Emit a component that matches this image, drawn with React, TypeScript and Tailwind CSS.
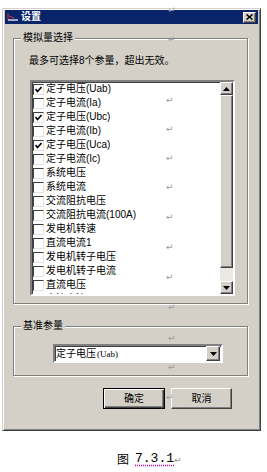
import React from 'react';

type Item = { label: string; checked: boolean };

const ITEMS: Item[] = [
  { label: '定子电压(Uab)', checked: true },
  { label: '定子电流(Ia)', checked: false },
  { label: '定子电压(Ubc)', checked: true },
  { label: '定子电流(Ib)', checked: false },
  { label: '定子电压(Uca)', checked: true },
  { label: '定子电流(Ic)', checked: false },
  { label: '系统电压', checked: false },
  { label: '系统电流', checked: false },
  { label: '交流阻抗电压', checked: false },
  { label: '交流阻抗电流(100A)', checked: false },
  { label: '发电机转速', checked: false },
  { label: '直流电流1', checked: false },
  { label: '发电机转子电压', checked: false },
  { label: '发电机转子电流', checked: false },
  { label: '直流电压', checked: false },
  { label: '直流电流2', checked: false },
];

// Word paragraph marks that sit over the screenshot
const MARKS: [number, number][] = [
  [168, 5], [168, 34], [166, 95], [166, 124], [166, 153], [166, 182],
  [166, 212], [166, 242], [166, 272], [168, 302], [168, 333], [168, 362], [166, 392],
];

const raised =
  'bg-[#d4d0c8] border border-t-white border-l-white border-r-[#404040] border-b-[#404040] shadow-[inset_-1px_-1px_0_#808080]';
const sunken =
  'border-2 border-t-[#808080] border-l-[#808080] border-r-white border-b-white';

function Arrow({ up }: { up?: boolean }) {
  return (
    <svg width="7" height="4" viewBox="0 0 7 4">
      <polygon points={up ? '3.5,0 7,4 0,4' : '0,0 7,0 3.5,4'} fill="#000" />
    </svg>
  );
}

function CheckBox({ checked }: { checked: boolean }) {
  return (
    <div className="w-[11px] h-[11px] shrink-0 bg-white border border-t-[#404040] border-l-[#404040] border-r-[#e4e4e4] border-b-[#e4e4e4] flex items-center justify-center">
      {checked && (
        <svg width="7" height="7" viewBox="0 0 7 7">
          <polyline points="0.5,3 2.5,5.5 6.5,1" fill="none" stroke="#000" strokeWidth="1.6" />
        </svg>
      )}
    </div>
  );
}

function GroupBox({ title, className, children }: { title: string; className?: string; children: React.ReactNode }) {
  return (
    <fieldset
      className={`ml-[8px] w-[235px] border border-[#808080] shadow-[1px_1px_0_#fff,inset_1px_1px_0_#fff] ${className ?? ''}`}
    >
      <legend className="ml-[7px] px-[2px] leading-[14px] bg-[#d4d0c8] text-black">{title}</legend>
      {children}
    </fieldset>
  );
}

export default function App() {
  return (
    <div className="relative w-[267px] h-[472px] bg-white overflow-hidden font-['Liberation_Sans','Noto_Sans_CJK_SC',sans-serif] text-[10px]">
      <div className="pt-[8px] pl-[2px]">
        <div className="w-[259px] h-[423px] bg-[#d4d0c8] border border-t-[#d4d0c8] border-l-[#d4d0c8] border-r-[#404040] border-b-[#404040] shadow-[inset_1px_1px_0_#fff,inset_-1px_-1px_0_#808080] px-[2px] pt-[1px]">
          {/* title bar */}
          <div className="h-[14px] bg-[#0a246a] flex items-center pl-[2px] pr-[2px]">
            <svg width="12" height="10" viewBox="0 0 12 10" className="shrink-0">
              <line x1="1" y1="1" x2="1" y2="8" stroke="#c03030" strokeWidth="1.2" />
              <line x1="1" y1="8" x2="11" y2="8" stroke="#e8e8f0" strokeWidth="1.4" />
              <line x1="2" y1="4" x2="7" y2="6" stroke="#d04040" strokeWidth="1" />
            </svg>
            <span className="ml-[2px] text-white font-bold leading-[14px]">设置</span>
            <div className={`ml-auto w-[13px] h-[11px] ${raised} flex items-center justify-center`}>
              <svg width="7" height="6" viewBox="0 0 7 6">
                <path d="M0.5 0.5 L6.5 5.5 M6.5 0.5 L0.5 5.5" stroke="#000" strokeWidth="1.5" />
              </svg>
            </div>
          </div>

          <GroupBox title="模拟量选择" className="mt-[7px] pb-[7px]">
            <div className="ml-[15px] mt-[9px] leading-[14px] text-black">最多可选择8个参量，超出无效。</div>
            <div className={`ml-[16px] mt-[12px] w-[205px] h-[216px] bg-white ${sunken} shadow-[inset_1px_1px_0_#404040] flex`}>
              <div className="flex-1 overflow-hidden pl-[1px]">
                {ITEMS.map((it) => (
                  <div key={it.label} className="h-[14px] flex items-center gap-[2px] text-black">
                    <CheckBox checked={it.checked} />
                    <span className="leading-[14px] whitespace-nowrap">{it.label}</span>
                  </div>
                ))}
              </div>
              <div className="w-[13px] flex flex-col">
                <div className={`h-[13px] ${raised} flex items-center justify-center`}>
                  <Arrow up />
                </div>
                <div className={`flex-1 ${raised}`} />
                <div className="h-[13px] bg-[#ebe9e4]" />
                <div className={`h-[13px] ${raised} flex items-center justify-center`}>
                  <Arrow />
                </div>
              </div>
            </div>
          </GroupBox>

          <GroupBox title="基准参量" className="mt-[15px] pb-[12px]">
            <div className={`ml-[39px] mt-[11px] w-[170px] h-[19px] bg-white ${sunken} shadow-[inset_1px_1px_0_#404040] flex items-center`}>
              <div className="flex-1 pl-[1px] text-black leading-[14px] whitespace-nowrap">
                定子电压<span className="font-['Liberation_Serif',serif] text-[9px] ml-[1px]">(Uab)</span>
              </div>
              <div className={`w-[14px] h-[15px] mr-[1px] ${raised} flex items-center justify-center`}>
                <Arrow />
              </div>
            </div>
          </GroupBox>

          <div className="mt-[12px] ml-[98px] flex gap-[6px]">
            <div className="w-[62px] h-[21px] border border-black bg-[#d4d0c8] shadow-[inset_1px_1px_0_#fff,inset_-1px_-1px_0_#404040,inset_-2px_-2px_0_#808080] flex items-center justify-center text-black">
              确定
            </div>
            <div className={`w-[61px] h-[21px] ${raised} flex items-center justify-center text-black`}>取消</div>
          </div>
        </div>
      </div>

      <div className="mt-[20px] ml-[117px] flex items-end text-black">
        <span className="font-['Noto_Sans_CJK_SC',sans-serif] text-[12px] leading-[16px]">图</span>
        <span className="ml-[6px] font-['Liberation_Mono',monospace] text-[13px] leading-[16px] underline decoration-dotted decoration-[#c000c0] underline-offset-[3px]">
          7.3.1
        </span>
        <span className="text-[#909090] font-['DejaVu_Sans',sans-serif] text-[9px] leading-[14px]">↵</span>
      </div>

      {MARKS.map(([x, y]) => (
        <span
          key={`${x}-${y}`}
          className="absolute text-[#9a9a9a] font-['DejaVu_Sans',sans-serif] text-[9px] leading-[10px]"
          style={{ left: x, top: y }}
        >
          ↵
        </span>
      ))}
    </div>
  );
}
